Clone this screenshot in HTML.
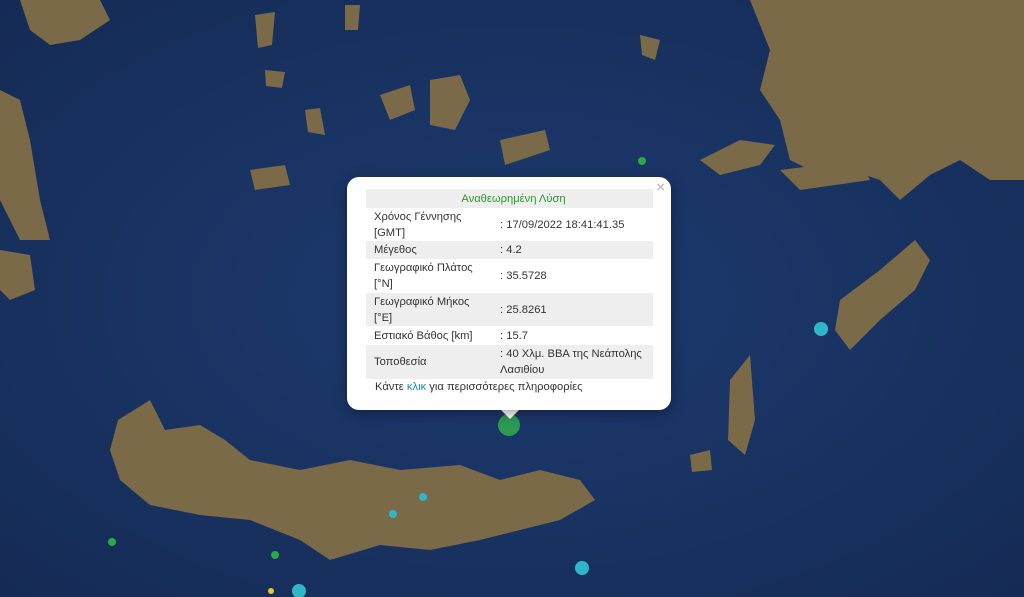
<!DOCTYPE html>
<html><head><meta charset="utf-8"><style>
body{margin:0;width:1024px;height:597px;overflow:hidden;background:#1c3868;font-family:"Liberation Sans",Arial,sans-serif;position:relative}
svg{position:absolute;left:0;top:0}
.pop{position:absolute;left:347px;top:177px;width:324px;height:233px;background:#fff;border-radius:12px;box-shadow:0 3px 14px rgba(0,0,0,.4)}
.tip{position:absolute;left:499px;top:408px;width:0;height:0;border-left:11px solid transparent;border-right:11px solid transparent;border-top:11px solid #fff}
.x{position:absolute;right:6px;top:2px;color:#c3c3c3;font-size:15px;font-weight:bold}
table{position:absolute;left:19px;top:12px;width:287px;border-collapse:collapse;font-size:11.2px;color:#333;table-layout:fixed}
td{padding:0 0 0 8px;line-height:16px;vertical-align:middle}
tr.g{background:#eee}
.h td{text-align:center;color:#2a9a2a;height:19px}
.link{position:absolute;left:28px;top:204px;font-size:11.2px;color:#333}
.link a{color:#1a8bb8;text-decoration:none}
</style></head><body>
<svg width="1024" height="597" viewBox="0 0 1024 597">
<defs><radialGradient id="o" cx="50%" cy="50%" r="70%"><stop offset="0" stop-color="#1d3b70"/><stop offset="1" stop-color="#152b55"/></radialGradient></defs>
<rect width="1024" height="597" fill="url(#o)"/>
<g fill="#7a6a48">
<path d="M118 420 L150 400 L165 430 L200 425 L225 440 L250 460 L300 470 L350 460 L400 470 L460 465 L500 480 L540 470 L580 480 L595 500 L560 520 L520 530 L480 540 L430 550 L380 545 L330 560 L300 540 L250 520 L200 515 L150 505 L120 480 L110 450 Z"/>
<path d="M750 0 L1024 0 L1024 180 L990 180 L960 160 L930 175 L900 200 L880 180 L850 170 L820 175 L790 160 L780 120 L760 90 L770 50 Z"/>
<path d="M840 300 L880 270 L915 240 L930 260 L915 290 L880 320 L850 350 L835 330 Z"/>
<path d="M0 90 L20 100 L30 140 L40 200 L50 240 L20 240 L0 200 Z"/>
<path d="M20 0 L100 0 L110 20 L80 40 L50 45 L30 30 Z"/>
<path d="M700 160 L740 140 L775 145 L760 165 L720 175 Z"/>
<path d="M730 380 L750 355 L755 420 L745 455 L728 440 Z"/>
<path d="M430 80 L460 75 L470 100 L455 130 L430 125 Z"/>
<path d="M380 95 L410 85 L415 110 L390 120 Z"/>
<path d="M250 170 L285 165 L290 185 L255 190 Z"/>
<path d="M500 140 L545 130 L550 150 L505 165 Z"/>
<path d="M780 170 L860 160 L870 180 L800 190 Z"/>
<path d="M0 250 L30 255 L35 290 L10 300 L0 290 Z"/>
<path d="M255 15 L275 12 L272 45 L258 48 Z"/>
<path d="M345 5 L360 5 L358 30 L345 30 Z"/>
<path d="M265 70 L285 72 L282 88 L266 86 Z"/>
<path d="M305 110 L320 108 L325 135 L308 132 Z"/>
<path d="M640 35 L660 40 L655 60 L642 55 Z"/>
<path d="M690 455 L710 450 L712 470 L692 472 Z"/>
</g>
<g fill="#2fb7c9"><circle cx="821" cy="329" r="7"/><circle cx="582" cy="568" r="7"/><circle cx="393" cy="514" r="4"/><circle cx="423" cy="497" r="4"/><circle cx="299" cy="591" r="7"/></g>
<g fill="#2aa84a"><circle cx="642" cy="161" r="4"/><circle cx="112" cy="542" r="4"/><circle cx="275" cy="555" r="4"/></g>
<circle cx="271" cy="591" r="3" fill="#e8c830"/>
<circle cx="509" cy="425" r="11" fill="#2e9a55"/>
</svg>
<div class="tip"></div>
<div class="pop"><div class="x">×</div>
<table>
<colgroup><col style="width:126px"><col></colgroup>
<tr class="g h"><td colspan="2">Αναθεωρημένη Λύση</td></tr>
<tr style="height:33px"><td>Χρόνος Γέννησης<br>[GMT]</td><td>: 17/09/2022 18:41:41.35</td></tr>
<tr class="g" style="height:18px"><td>Μέγεθος</td><td>: 4.2</td></tr>
<tr style="height:34px"><td>Γεωγραφικό Πλάτος<br>[°N]</td><td>: 35.5728</td></tr>
<tr class="g" style="height:33px"><td>Γεωγραφικό Μήκος<br>[°E]</td><td>: 25.8261</td></tr>
<tr style="height:19px"><td style="white-space:nowrap">Εστιακό Βάθος [km]</td><td>: 15.7</td></tr>
<tr class="g" style="height:34px"><td>Τοποθεσία</td><td>: 40 Χλμ. ΒΒΑ της Νεάπολης Λασιθίου</td></tr>
</table>
<div class="link">Κάντε <a>κλικ</a> για περισσότερες πληροφορίες</div>
</div>
</body></html>
